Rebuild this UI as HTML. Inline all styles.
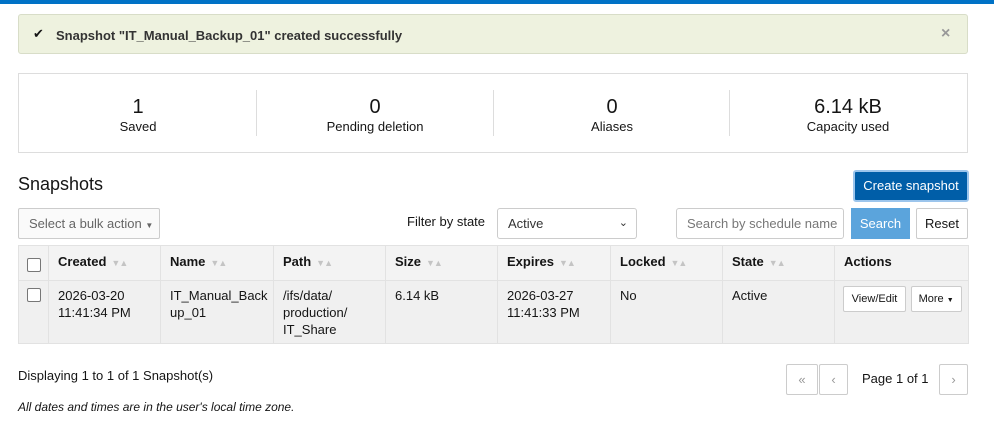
<!DOCTYPE html>
<html><head><meta charset="utf-8"><style>
*{box-sizing:border-box;margin:0;padding:0}
body{width:994px;height:435px;background:#fff;font-family:"Liberation Sans",sans-serif;font-size:13px;color:#151515;position:relative;overflow:hidden}
.a{position:absolute}
.top{left:0;top:0;width:994px;height:4px;background:#0072c6}
.alert{left:18px;top:14px;width:950px;height:40px;background:#eef2df;border:1px solid #d8ddc8;border-radius:3px}
.stats{left:18px;top:73px;width:950px;height:80px;border:1px solid #ddd}
.div{top:90px;width:1px;height:46px;background:#ddd}
.stat{top:96px;text-align:center;width:236px}
.stat b{display:block;font-weight:normal;font-size:20px;line-height:22px}
.stat span{display:block;font-size:13px;line-height:18px}
.btn{border:1px solid #ccc;border-radius:2px;background:#fff;text-align:center}
th,td{border:1px solid #e2e2e2;text-align:left;vertical-align:top}
table{border-collapse:collapse;position:absolute;left:18px;top:245px;width:950px;table-layout:fixed}
th{background:#f3f3f3;height:35px;padding:8px 9px 0;font-weight:bold;font-size:13px}
td{background:#f0f0f0;height:63px;padding:6px 9px 5px;line-height:17px}
.s{color:#c4c4c4;font-size:9px;margin-left:5px;letter-spacing:-1px}
.cb{display:inline-block;width:14px;height:14px;border:1px solid #777;border-radius:2px;background:#fff}
</style></head><body>
<div class="a top"></div>
<div class="a alert"></div>
<div class="a" style="left:33px;top:26px;font-size:13px">&#10004;</div>
<div class="a" style="left:56px;top:28px;font-weight:bold;font-size:13px;color:#333">Snapshot "IT_Manual_Backup_01" created successfully</div>
<div class="a" style="left:941px;top:25px;font-size:16px;color:#999;font-weight:bold">×</div>
<div class="a stats"></div>
<div class="a div" style="left:256px"></div><div class="a div" style="left:493px"></div><div class="a div" style="left:729px"></div>
<div class="a stat" style="left:20px"><b>1</b><span>Saved</span></div>
<div class="a stat" style="left:257px"><b>0</b><span>Pending deletion</span></div>
<div class="a stat" style="left:494px"><b>0</b><span>Aliases</span></div>
<div class="a stat" style="left:730px"><b>6.14 kB</b><span>Capacity used</span></div>
<div class="a" style="left:18px;top:174px;font-size:18px">Snapshots</div>
<div class="a" style="left:853px;top:170px;width:116px;height:32px;background:#005ea8;border:2px solid #9cc5ec;border-radius:3px;color:#fff;text-align:center;line-height:28px">Create snapshot</div>
<div class="a btn" style="left:18px;top:208px;width:142px;height:31px;line-height:29px;color:#666;background:#fafafa;text-align:left;padding-left:10px">Select a bulk action <span style="font-size:8px">▼</span></div>
<div class="a" style="left:407px;top:214px">Filter by state</div>
<div class="a btn" style="left:497px;top:208px;width:140px;height:31px;line-height:29px;text-align:left;padding-left:10px;border-radius:3px;color:#333">Active<span style="position:absolute;right:8px;font-size:11px">&#8964;</span></div>
<div class="a btn" style="left:676px;top:208px;width:168px;height:31px;line-height:29px;text-align:left;padding-left:10px;color:#777;border-radius:3px">Search by schedule name</div>
<div class="a" style="left:851px;top:208px;width:59px;height:31px;line-height:31px;background:#5ba4dc;color:#fff;text-align:center">Search</div>
<div class="a btn" style="left:916px;top:208px;width:52px;height:31px;line-height:29px">Reset</div>
<table>
<colgroup><col style="width:30px"><col style="width:112px"><col style="width:113px"><col style="width:112px"><col style="width:112px"><col style="width:113px"><col style="width:112px"><col style="width:112px"><col style="width:134px"></colgroup>
<tr><th style="padding:12px 0 0 8px"><span class="cb"></span></th><th>Created<span class="s">▼▲</span></th><th>Name<span class="s">▼▲</span></th><th>Path<span class="s">▼▲</span></th><th>Size<span class="s">▼▲</span></th><th>Expires<span class="s">▼▲</span></th><th>Locked<span class="s">▼▲</span></th><th>State<span class="s">▼▲</span></th><th>Actions</th></tr>
<tr><td style="padding:7px 0 0 8px"><span class="cb"></span></td><td>2026-03-20<br>11:41:34 PM</td><td>IT_Manual_Back<br>up_01</td><td>/ifs/data/<br>production/<br>IT_Share</td><td>6.14 kB</td><td>2026-03-27<br>11:41:33 PM</td><td>No</td><td>Active</td><td style="padding:5px 0 0 8px"><span class="btn" style="display:inline-block;width:63px;height:26px;line-height:24px;font-size:11px">View/Edit</span> <span class="btn" style="display:inline-block;width:51px;height:26px;line-height:24px;font-size:11px;margin-left:1px">More <span style="font-size:7px">▼</span></span></td></tr>
</table>
<div class="a" style="left:18px;top:368px">Displaying 1 to 1 of 1 Snapshot(s)</div>
<div class="a btn" style="left:786px;top:364px;width:32px;height:31px;line-height:29px;color:#999">«</div>
<div class="a btn" style="left:819px;top:364px;width:29px;height:31px;line-height:29px;color:#999">‹</div>
<div class="a" style="left:862px;top:371px">Page 1 of 1</div>
<div class="a btn" style="left:939px;top:364px;width:29px;height:31px;line-height:29px;color:#999">›</div>
<div class="a" style="left:18px;top:400px;font-style:italic;font-size:12px">All dates and times are in the user's local time zone.</div>
</body></html>
